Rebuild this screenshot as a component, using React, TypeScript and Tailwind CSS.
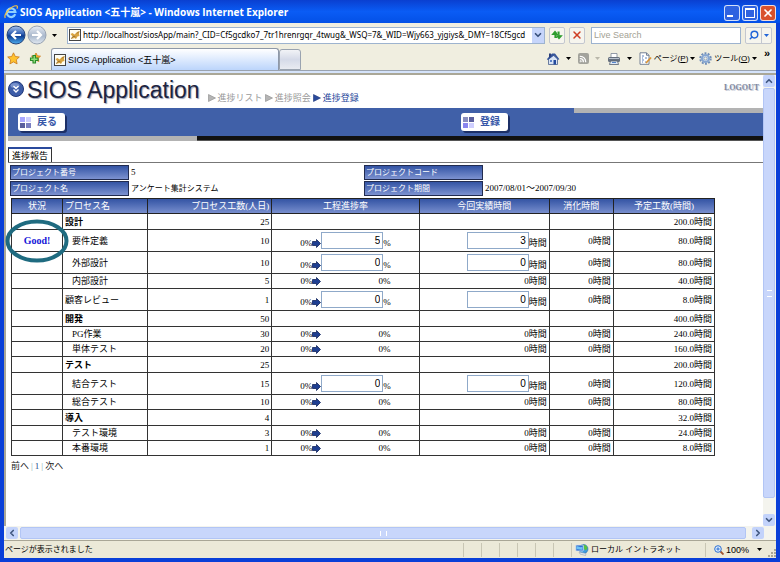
import type { ReactNode } from "react";

import clsx from "clsx";
import { ChevronDown, ChevronLeft, ChevronRight, ChevronUp, Rss, Search, X } from "lucide-react";

type Task = {
  name: string;
  effort: number;
  planned: string;
  group?: boolean;
  topLevel?: boolean;
  editable?: boolean;
  progress?: number;
  hours?: number;
  status?: string;
};

const tasks: Task[] = [
  { name: "設計", effort: 25, planned: "200.0", group: true },
  { name: "要件定義", effort: 10, planned: "80.0", editable: true, progress: 5, hours: 3, status: "Good!" },
  { name: "外部設計", effort: 10, planned: "80.0", editable: true },
  { name: "内部設計", effort: 5, planned: "40.0" },
  { name: "顧客レビュー", effort: 1, planned: "8.0", editable: true, topLevel: true },
  { name: "開発", effort: 50, planned: "400.0", group: true },
  { name: "PG作業", effort: 30, planned: "240.0" },
  { name: "単体テスト", effort: 20, planned: "160.0" },
  { name: "テスト", effort: 25, planned: "200.0", group: true },
  { name: "結合テスト", effort: 15, planned: "120.0", editable: true },
  { name: "総合テスト", effort: 10, planned: "80.0" },
  { name: "導入", effort: 4, planned: "32.0", group: true },
  { name: "テスト環境", effort: 3, planned: "24.0" },
  { name: "本番環境", effort: 1, planned: "8.0" },
];

const sans = "font-['Liberation_Sans','Noto_Sans_CJK_JP',sans-serif]";
const serif = "font-['Liberation_Serif','Noto_Sans_CJK_JP',serif]";

function Caret({ className = "fill-black" }: { className?: string }) {
  return (
    <svg viewBox="0 0 5 3" className={clsx("h-[3px] w-[5px] shrink-0", className)}>
      <path d="M0 0h5L2.5 3z" />
    </svg>
  );
}

function IeLogo() {
  return (
    <svg viewBox="0 0 14 14" className="size-3.5 shrink-0">
      <path d="M11.2 9.2A4.3 4.3 0 1 1 11.4 7H4" fill="none" stroke="#8fd0ff" strokeWidth="2.2" />
      <path d="M1.3 13C-.8 9.5 7.5 .3 12.7 .8c1 .2.9 1.5.2 2.9" fill="none" stroke="#f5c542" strokeWidth="1.2" />
    </svg>
  );
}

function TomcatIcon() {
  return (
    <svg viewBox="0 0 12 12" className="size-3 shrink-0">
      <rect x=".5" y=".5" width="11" height="11" fill="#fffdf2" stroke="#444" />
      <path d="M1.5 5l2-1 2 1.5L8 3l2.5-1-.5 3 .5 2-2 .5L7 10 5.5 9 2 10l1.5-2.5z" fill="#d9a441" />
      <path d="M2 9.5L5 7l1.5 1M8 4.5l2-2" stroke="#7a5a2c" strokeWidth=".7" fill="none" />
    </svg>
  );
}

function NavBall({ forward }: { forward?: boolean }) {
  return (
    <svg viewBox="0 0 20 20" className="size-5 shrink-0">
      <defs>
        <linearGradient id={forward ? "fwd" : "back"} x1="0" y1="0" x2="0" y2="1">
          <stop offset="0" stopColor={forward ? "#e8edf4" : "#a9c4ee"} />
          <stop offset=".45" stopColor={forward ? "#b4c1d3" : "#2c5cb0"} />
          <stop offset=".55" stopColor={forward ? "#a9b8cc" : "#0b3a8f"} />
          <stop offset="1" stopColor={forward ? "#e3eaf2" : "#4fb0f2"} />
        </linearGradient>
      </defs>
      <circle cx="10" cy="10" r="9" fill={`url(#${forward ? "fwd" : "back"})`} stroke={forward ? "#98a3b3" : "#24447c"} />
      <path
        d={forward ? "M5 10h9M10 6l4 4-4 4" : "M15 10H6M10 6l-4 4 4 4"}
        fill="none"
        stroke="#fff"
        strokeWidth="2.2"
      />
    </svg>
  );
}

function StarIcon() {
  return (
    <svg viewBox="0 0 13 13" className="size-[13px]">
      <path
        d="M6.5 .8l1.8 3.7 4 .5-3 2.8.8 4.1-3.6-2-3.6 2 .8-4.1-3-2.8 4-.5z"
        fill="#ffc22e"
        stroke="#c9781a"
        strokeWidth=".8"
      />
    </svg>
  );
}

function AddStarIcon() {
  return (
    <svg viewBox="0 0 13 13" className="size-[13px]">
      <path
        d="M8 1l1.4 2.8 3.1.4-2.300 2.100.6 3.200L8 8 5.200 9.500l.6-3.200L3.500 4.200l3.100-.4z"
        fill="#ffb02e"
        stroke="#c9781a"
        strokeWidth=".8"
      />
      <path d="M5 3.500h2.500V6H10v2.500H7.500V11H5V8.500H2.500V6H5z" fill="#8fe07a" stroke="#2a8a2a" strokeWidth="1.1" />
    </svg>
  );
}

function HomeIcon() {
  return (
    <svg viewBox="0 0 14 14" className="size-3.5">
      <path d="M2.5 7v5.5h9V7L7 3z" fill="#d8e3f5" stroke="#4a5f8c" strokeWidth=".8" />
      <path d="M.8 7.2L6 1.5h3l4.4 5.7-1.2.6L8 3.5 2 8z" fill="#35549a" />
      <path d="M3 1.5h2V4L3 6z" fill="#2b3f7a" />
      <rect x="7.5" y="8" width="2.5" height="4.5" fill="#234a9c" />
      <rect x="4" y="8" width="2" height="2" fill="#5d83c9" />
    </svg>
  );
}

function PrinterIcon() {
  return (
    <svg viewBox="0 0 14 14" className="size-3.5">
      <path d="M4 1.5h6V6H4z" fill="#fff" stroke="#7a8596" strokeWidth=".8" />
      <rect x="1" y="5" width="12" height="5" rx="1.5" fill="#66707e" />
      <rect x="2" y="6" width="10" height="1" fill="#b9c2ce" />
      <path d="M3.5 9h7l1 3.5h-9z" fill="#dfe9f6" stroke="#56606e" strokeWidth=".8" />
      <rect x="5" y="10" width="4" height="1" fill="#5585cc" />
    </svg>
  );
}

function PageIcon() {
  return (
    <svg viewBox="0 0 13 13" className="size-[13px]">
      <path d="M1 .8h6.5L10 3.3v9H1z" fill="#fff" stroke="#66758c" strokeWidth=".9" />
      <path d="M7.5 .8v2.5H10" fill="none" stroke="#66758c" strokeWidth=".9" />
      <path d="M3 4h2M3 6h1M6 6h2M3 8h2M3 10h1M6 10h1" stroke="#5d80bd" />
      <path d="M12 5.5L7 11" stroke="#d99233" strokeWidth="1.8" />
    </svg>
  );
}

function GearIcon() {
  return (
    <svg viewBox="0 0 13 13" className="size-[13px]">
      <circle cx="6.5" cy="6.5" r="5.3" fill="none" stroke="#6f8db8" strokeWidth="1.8" strokeDasharray="2 1.33" />
      <circle cx="6.5" cy="6.5" r="3.5" fill="#e9f1fb" stroke="#86a6d1" strokeWidth="2.2" />
      <circle cx="6.5" cy="6.5" r="1.6" fill="#f3f1e2" stroke="#5d7ba6" strokeWidth=".6" />
    </svg>
  );
}

function IntranetIcon() {
  return (
    <svg viewBox="0 0 14 12" className="h-3 w-3.5 shrink-0">
      <circle cx="8.500" cy="5" r="4.500" fill="#3f9be0" stroke="#1c5a9c" strokeWidth=".5" />
      <path d="M8 .8c2 0 4 1 4.600 3.200L11 6.500 9 5V3z" fill="#58c23f" />
      <rect x=".8" y="1" width="7.500" height="6" rx=".8" fill="#2f6fd0" stroke="#dbe4f0" strokeWidth=".8" />
      <path d="M1.500 2.500c2-1 3 1.500 6 .3V5.500c-2 1-4-1-6 0z" fill="#6ec2f5" />
      <path d="M4 8l7 1.500-.5 2L5 10z" fill="#e4e9f0" stroke="#8a96a8" strokeWidth=".5" />
    </svg>
  );
}

function ProgressArrow() {
  return (
    <svg viewBox="0 0 9 9" className="size-[9px] shrink-0">
      <path d="M.5 2.5h4V.5l4 4-4 4v-2h-4z" fill="#1e3f92" stroke="#10245c" strokeWidth=".8" />
    </svg>
  );
}

function ToolbarButton({ label, children, caret = "fill-black" }: { label: string; children: ReactNode; caret?: string }) {
  return (
    <button type="button" aria-label={label} className="flex items-center gap-1.5">
      {children}
      <Caret className={caret} />
    </button>
  );
}

function TitleBar() {
  const control = "flex size-4 items-center justify-center rounded-[3px] border border-white/80";
  return (
    <header className="flex h-[23px] items-center gap-0.5 rounded-t-md bg-linear-to-b from-[#0a3fd0] via-[#0a5cf5] to-[#0450e6] pr-1 pl-1">
      <IeLogo />
      <h1 className="flex-1 truncate font-['Open_Sans','Noto_Sans_CJK_JP',sans-serif] text-[10px] leading-4 font-bold text-white">
        {"SIOS Application <五十嵐> - Windows Internet Explorer"}
      </h1>
      <div className="flex gap-0.5 pt-0.5">
        <button type="button" aria-label="最小化" className={clsx(control, "bg-[#2f62e0]")}>
          <span className="mt-1.5 mr-1 h-0.5 w-1.5 bg-white" />
        </button>
        <button type="button" aria-label="最大化" className={clsx(control, "bg-[#2f62e0]")}>
          <span className="size-2.5 border border-t-2 border-white" />
        </button>
        <button type="button" aria-label="閉じる" className={clsx(control, "bg-[#d9512c]")}>
          <X className="size-3 text-white" strokeWidth={3.5} />
        </button>
      </div>
    </header>
  );
}

function AddressBar() {
  const small = "flex h-[17px] w-4 items-center justify-center rounded-[2px] border border-[#c3c7cf] bg-[#f6f5ee]";
  return (
    <div className="flex h-6 items-center gap-1 pr-1 pl-0.5">
      <div className="flex items-center gap-px">
        <button type="button" aria-label="戻る"><NavBall /></button>
        <button type="button" aria-label="進む"><NavBall forward /></button>
        <button type="button" aria-label="履歴" className="px-1"><Caret /></button>
      </div>
      <div className="ml-0.5 flex h-[17px] min-w-0 flex-1 items-center gap-0.5 border border-[#9db3cf] bg-white pl-px">
        <TomcatIcon />
        <input
          aria-label="アドレス"
          className="min-w-0 flex-1 font-['Noto_Sans',sans-serif] text-[8px] leading-3 text-black outline-none"
          defaultValue="http://localhost/siosApp/main?_CID=Cf5gcdko7_7tr1hrenrgqr_4twug&_WSQ=7&_WID=Wjy663_yjgiys&_DMY=18Cf5gcd"
        />
        <button type="button" aria-label="アドレス一覧" className="flex h-full w-3 items-center justify-center bg-[#c6d5fb]">
          <ChevronDown className="size-2.5 text-[#38507c]" strokeWidth={4} />
        </button>
      </div>
      <button type="button" aria-label="更新" className={small}>
        <svg viewBox="0 0 12 12" className="size-3">
          <path d="M6 8.5H4V4M1.5 5.5L4 2.500l2.500 3z" fill="#2f9d2f" stroke="#2f9d2f" strokeWidth="1.2" />
          <path d="M6.500 3H8v5M5.800 6.800L8 9.500l2.500-2.700z" fill="#2f9d2f" stroke="#2f9d2f" strokeWidth="1.2" />
        </svg>
      </button>
      <button type="button" aria-label="中止" className={small}>
        <X className="size-3 text-[#cf3f23]" strokeWidth={3} />
      </button>
      <input
        type="search"
        aria-label="Live Search"
        placeholder="Live Search"
        className="ml-0.5 h-[17px] w-[150px] border border-[#9db3cf] bg-white px-0.5 text-[9px] leading-3 outline-none placeholder:text-[#a3a194]"
      />
      <div className="flex h-[17px] items-center rounded-[2px] border border-[#c3c7cf] bg-[#f6f5ee]">
        <button type="button" aria-label="検索" className="flex h-full w-4 items-center justify-center border-r border-[#c3c7cf]">
          <Search className="size-2.5 -scale-x-100 text-[#2265d8]" strokeWidth={3.5} />
        </button>
        <button type="button" aria-label="検索オプション" className="px-0.5">
          <Caret className="fill-[#2265d8]" />
        </button>
      </div>
    </div>
  );
}

function TabBar() {
  return (
    <div className="flex h-6 items-end border-b border-[#9aa3b0] pl-[3px]">
      <div className="flex h-full items-center gap-2 pr-2.5">
        <button type="button" aria-label="お気に入り"><StarIcon /></button>
        <button type="button" aria-label="お気に入りに追加"><AddStarIcon /></button>
      </div>
      <button
        type="button"
        className="flex h-[22px] w-[228px] items-center gap-0.5 rounded-t-[3px] border border-b-0 border-[#8e98a8] bg-linear-to-b from-white to-[#bcd5fb] pl-0.5 text-[9px] leading-3"
      >
        <TomcatIcon />
        {"SIOS Application <五十嵐>"}
      </button>
      <button
        type="button"
        aria-label="新しいタブ"
        className="h-[21px] w-[22px] rounded-t-[3px] border border-[#9aa3b0] bg-linear-to-b from-[#f2f3f6] via-[#d5dae8] to-[#e9ebf1]"
      />
      <div className="flex h-full flex-1 items-center justify-end gap-[7px] text-[9px] leading-3">
        <ToolbarButton label="ホーム"><HomeIcon /></ToolbarButton>
        <ToolbarButton label="フィード" caret="fill-[#b9b7aa]">
          <span className="flex size-[11px] items-center justify-center rounded-[2px] bg-[#a3a39c]">
            <Rss className="size-2 text-white" strokeWidth={4} />
          </span>
        </ToolbarButton>
        <ToolbarButton label="印刷"><PrinterIcon /></ToolbarButton>
        <div className="flex items-center gap-1">
          <button type="button" className="flex items-center gap-0.5">
            <PageIcon />
            <span className="text-[8px]">ページ(<u>P</u>)</span>
            <Caret />
          </button>
          <button type="button" className="flex items-center gap-0.5">
            <GearIcon />
            <span className="text-[8px]">ツール(<u>O</u>)</span>
            <Caret />
          </button>
        </div>
        <button type="button" aria-label="その他" className="self-start pr-1.5 text-[11px] leading-3 font-bold">»</button>
      </div>
    </div>
  );
}

function AppButton({ children, flipped }: { children: ReactNode; flipped?: boolean }) {
  const tones = flipped
    ? ["bg-[#8a8ec0]", "bg-[#5a5f9e]", "bg-[#8a86ee]", "bg-[#cfcfff]"]
    : ["bg-[#a9a7ff]", "bg-[#cfcfff]", "bg-[#5a5f9e]", "bg-[#7a7fc2]"];
  return (
    <button
      type="button"
      className="flex h-[18px] items-center gap-1.5 rounded-[3px] bg-white px-0.5 pr-2 text-[10px] leading-4 font-bold text-[#3858a8] shadow-[2px_2px_0_#1c2f66]"
    >
      <span className="grid grid-cols-2 gap-px">
        {tones.map((tone) => (
          <span key={tone} className={clsx("size-[5px]", tone)} />
        ))}
      </span>
      {children}
    </button>
  );
}

function Crumb({ children, current }: { children: ReactNode; current?: boolean }) {
  return (
    <li className={clsx("flex items-center gap-0.5", current ? "text-[#2a4a9c]" : "text-[#9a9a9a]")}>
      <svg viewBox="0 0 8 8" className="size-2">
        <path d="M.5 .5v7l7-3.5z" fill={current ? "#2a4a9c" : "#b5b5b5"} stroke={current ? "#1c3578" : "#8a8a8a"} strokeWidth=".6" />
      </svg>
      {current ? children : <a href="#">{children}</a>}
    </li>
  );
}

function AppHeader() {
  return (
    <div className="flex h-[33px] items-start">
      <svg viewBox="0 0 16 16" className="mt-1.5 size-4">
        <circle cx="8" cy="8" r="7.5" fill="#3d5da8" stroke="#1f3778" />
        <ellipse cx="7" cy="4.5" rx="4.5" ry="2.5" fill="#90a8dc" opacity=".7" />
        <path d="M5.5 5L8 7.5 10.5 5M5.5 8.5L8 11l2.5-2.5" fill="none" stroke="#fff" strokeWidth="1.3" />
      </svg>
      <h2 className="ml-[3px] text-[23px] leading-[30px] text-[#1d2440] [text-shadow:1px_1px_1px_#9aa0b4]">SIOS Application</h2>
      <ol className="ml-2 flex gap-0.5 pt-[17px] text-[9px] leading-3">
        <Crumb>進捗リスト</Crumb>
        <Crumb>進捗照会</Crumb>
        <Crumb current>進捗登録</Crumb>
      </ol>
      <a href="#" className={clsx(serif, "mt-[7px] mr-1 ml-auto text-[8px] leading-3 font-bold text-[#8088a0] [text-shadow:1px_1px_0_#c9cdd8]")}>
        LOGOUT
      </a>
    </div>
  );
}

function ActionBand() {
  return (
    <div>
      <div className="bg-[#4060a8]">
        <div className="ml-[75%] h-[5px] bg-[#b3b3b3]" />
        <div className="flex h-[23px]">
          <div className="w-3/5 pl-2.5"><AppButton>戻る</AppButton></div>
          <AppButton flipped>登録</AppButton>
        </div>
      </div>
      <div className="flex h-[5px]">
        <div className="w-1/4 bg-[#b3b3b3]" />
        <div className="flex-1 border-b border-[#555] bg-[#111]" />
      </div>
    </div>
  );
}

function ProjectInfo() {
  const label = "h-[15px] border border-[#222c50] bg-linear-to-b from-[#3454a4] to-[#7d92d0] pl-px text-[8px] leading-[13px] text-white";
  const value = "pl-0.5 leading-[15px]";
  return (
    <dl className={clsx(serif, "grid grid-cols-[119px_235px_119px_1fr] gap-y-px pt-0.5 pl-0.5")}>
      <dt className={label}>プロジェクト番号</dt>
      <dd className={clsx(value, "text-[9px]")}>5</dd>
      <dt className={label}>プロジェクトコード</dt>
      <dd className={value} />
      <dt className={label}>プロジェクト名</dt>
      <dd className={clsx(value, "text-[8px]")}>アンケート集計システム</dd>
      <dt className={label}>プロジェクト期間</dt>
      <dd className={clsx(value, "text-[9px]")}>2007/08/01～2007/09/30</dd>
    </dl>
  );
}

function NumberField({ label, value }: { label: string; value: number }) {
  return (
    <input
      aria-label={label}
      defaultValue={value}
      className={clsx(sans, "h-[17px] w-[62px] border border-[#8fa9c9] bg-white px-0.5 text-right text-[10px] leading-3 outline-none")}
    />
  );
}

function TaskRow({ task }: { task: Task }) {
  const cell = "border border-[#333] px-0.5";
  return (
    <tr className={clsx(task.editable ? "h-[22px]" : task.group ? "h-4" : "h-[15px]")}>
      <td className={cell}>
        {task.status && (
          <div className="relative text-center text-[10px] font-bold text-[#1616d8]">
            {task.status}
            {/* marker ring around the status */}
            <svg viewBox="0 0 64 44" className="pointer-events-none absolute top-1/2 left-1/2 h-11 w-16 max-w-none -translate-1/2">
              <ellipse cx="32" cy="22" rx="29.5" ry="19.5" fill="none" stroke="#1f6b80" strokeWidth="4" />
            </svg>
          </div>
        )}
      </td>
      <td className={clsx(cell, task.group ? "font-bold" : !task.topLevel && "pl-[9px]")}>{task.name}</td>
      <td className={clsx(cell, "text-right")}>{task.effort}</td>
      <td className={cell}>
        {!task.group && (
          <div className="flex items-end justify-center">
            0%
            <span className="flex h-3 items-center"><ProgressArrow /></span>
            {task.editable ? (
              <>
                <NumberField label={`${task.name} 工程進捗率`} value={task.progress ?? 0} />%
              </>
            ) : (
              <span className="w-[69px] text-right">0%</span>
            )}
          </div>
        )}
      </td>
      <td className={cell}>
        {!task.group && (
          <div className="flex items-end justify-end">
            {task.editable ? <NumberField label={`${task.name} 今回実績時間`} value={task.hours ?? 0} /> : "0"}
            時間
          </div>
        )}
      </td>
      <td className={clsx(cell, "text-right")}>{!task.group && "0時間"}</td>
      <td className={clsx(cell, "text-right")}>{task.planned}時間</td>
    </tr>
  );
}

function TaskTable() {
  const head = "border border-[#222] px-0.5 font-normal";
  return (
    <div className="mt-0.5 mr-12 ml-[3px]">
      <table className={clsx(serif, "w-full table-fixed border-collapse text-[9px] leading-3")}>
        <colgroup>
          <col className="w-[51px]" />
          <col className="w-[85px]" />
          <col className="w-[124px]" />
          <col className="w-[147px]" />
          <col className="w-[130px]" />
          <col className="w-[64px]" />
          <col className="w-[101px]" />
        </colgroup>
        <thead className="bg-linear-to-b from-[#3454a4] to-[#7d92d0] text-white">
          <tr className="h-[15px]">
            <th className={head}>状況</th>
            <th className={clsx(head, "text-left")}>プロセス名</th>
            <th className={clsx(head, "text-right")}>プロセス工数(人日)</th>
            <th className={head}>工程進捗率</th>
            <th className={head}>今回実績時間</th>
            <th className={head}>消化時間</th>
            <th className={head}>予定工数(時間)</th>
          </tr>
        </thead>
        <tbody>
          {tasks.map((task) => (
            <TaskRow key={task.name} task={task} />
          ))}
        </tbody>
      </table>
      <nav className={clsx(serif, "mt-1 flex gap-0.5 text-[9px] leading-3 text-[#222]")}>
        <a href="#">前へ</a>
        <span className="text-[#8aa]">|</span>
        <a href="#" className="text-[#26508c]">1</a>
        <span className="text-[#8aa]">|</span>
        <a href="#">次へ</a>
      </nav>
    </div>
  );
}

const scrollButton = "flex size-3 shrink-0 items-center justify-center rounded-[2px] bg-[#c3d3fb] text-[#3f567f]";

function StatusBar() {
  return (
    <footer className="flex h-[18px] items-center border-t border-[#a9a696] bg-[#ece9d8] text-[8px] leading-3">
      <p className="flex-1 pl-px">ページが表示されました</p>
      {[0, 1, 2, 3, 4, 5].map((n) => (
        <span key={n} className="h-3.5 w-[18px] border-l border-[#c9c6b4]" />
      ))}
      <div className="flex h-3.5 w-[134px] items-center gap-0.5 border-l border-[#c9c6b4] pl-[3px]">
        <IntranetIcon />
        ローカル イントラネット
      </div>
      <button type="button" className="flex h-3.5 items-center gap-0.5 border-l border-[#c9c6b4] pr-1.5 pl-2 text-[9px]">
        <svg viewBox="0 0 10 10" className="size-2.5">
          <path d="M6 6l3.5 3.5" stroke="#a0522d" strokeWidth="1.8" />
          <circle cx="4" cy="4" r="3.3" fill="#e3f0ff" stroke="#2a6fd0" />
          <path d="M4 2.3v3.4M2.3 4h3.4" stroke="#2a6fd0" />
        </svg>
        100%
        <span className="pl-1.5"><Caret /></span>
      </button>
      <svg viewBox="0 0 8 8" className="mb-px size-2 self-end fill-[#a9a696]">
        <path d="M6 0h2v2H6zM3 3h2v2H3zM6 3h2v2H6zM0 6h2v2H0zM3 6h2v2H3zM6 6h2v2H6z" />
      </svg>
    </footer>
  );
}

export default function App() {
  return (
    <div className={clsx(sans, "flex min-h-screen flex-col bg-[#0a3fd8] text-black")}>
      <TitleBar />
      <div className="mx-1 mb-1 flex flex-1 flex-col bg-[#f0eee0]">
        <AddressBar />
        <TabBar />
        <div className="h-0.5 bg-[#d5e3fa]" />
        <main className="flex flex-1 border-t-2 border-l-2 border-[#aaa797] bg-white">
          <div className="min-w-0 flex-1 pl-0.5">
            <AppHeader />
            <ActionBand />
            <div className="mt-1.5 border-b border-[#777]">
              <button type="button" className="block h-[15px] border border-t-2 border-b-0 border-[#333] border-t-[#2a4a9c] px-[3px] text-[9px] leading-3">
                進捗報告
              </button>
            </div>
            <ProjectInfo />
            <TaskTable />
          </div>
          <div className="flex flex-col bg-[#f4f4ee] pr-px">
            <div className={scrollButton}><ChevronUp className="size-2.5" strokeWidth={4} /></div>
            <div className="mt-px mb-4 flex flex-1 items-center justify-center rounded-[2px] border border-[#b2c5f5] bg-[#c8d6fb]">
              <div className="h-[7px] w-[5px] border-y border-white" />
            </div>
            <div className={scrollButton}><ChevronDown className="size-2.5" strokeWidth={4} /></div>
          </div>
        </main>
        <div className="flex h-3.5 items-center bg-[#f4f4ee] pr-3 pl-0.5">
          <div className={scrollButton}><ChevronLeft className="size-2.5" strokeWidth={4} /></div>
          <div className="mr-1.5 ml-0.5 flex h-3 flex-1 items-center justify-center rounded-[2px] border border-[#b2c5f5] bg-[#c8d6fb]">
            <div className="h-[5px] w-[7px] border-x border-white" />
          </div>
          <div className={scrollButton}><ChevronRight className="size-2.5" strokeWidth={4} /></div>
        </div>
        <StatusBar />
      </div>
    </div>
  );
}
